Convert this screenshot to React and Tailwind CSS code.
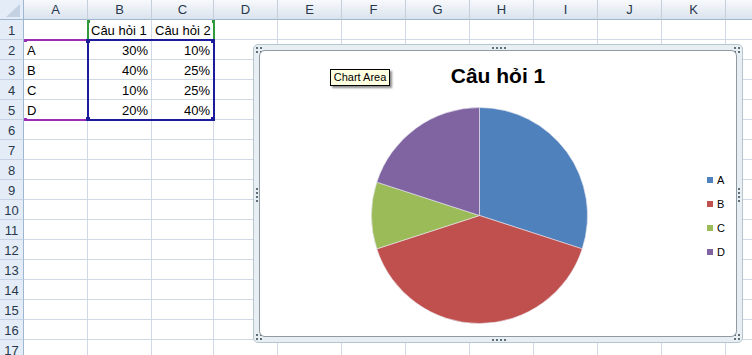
import React from 'react';

const cols = [
  { name: 'A', w: 64 },
  { name: 'B', w: 64 },
  { name: 'C', w: 62 },
  { name: 'D', w: 64 },
  { name: 'E', w: 64 },
  { name: 'F', w: 64 },
  { name: 'G', w: 64 },
  { name: 'H', w: 64 },
  { name: 'I', w: 64 },
  { name: 'J', w: 64 },
  { name: 'K', w: 64 },
  { name: '', w: 64 },
];

const data = {
  1: { B: 'Câu hỏi 1', C: 'Câu hỏi 2' },
  2: { A: 'A', B: '30%', C: '10%' },
  3: { A: 'B', B: '40%', C: '25%' },
  4: { A: 'C', B: '10%', C: '25%' },
  5: { A: 'D', B: '20%', C: '40%' },
};

const slices = [
  { label: 'A', value: 30, color: '#4f81bd' },
  { label: 'B', value: 40, color: '#c0504d' },
  { label: 'C', value: 10, color: '#9bbb59' },
  { label: 'D', value: 20, color: '#8064a2' },
];

function PieChart() {
  const r = 108;
  const c = 108.5;
  let angle = -Math.PI / 2;
  const paths = slices.map((s) => {
    const a0 = angle;
    const a1 = angle + (s.value / 100) * Math.PI * 2;
    angle = a1;
    const x0 = c + r * Math.cos(a0);
    const y0 = c + r * Math.sin(a0);
    const x1 = c + r * Math.cos(a1);
    const y1 = c + r * Math.sin(a1);
    const large = a1 - a0 > Math.PI ? 1 : 0;
    return (
      <path
        key={s.label}
        d={`M ${c} ${c} L ${x0} ${y0} A ${r} ${r} 0 ${large} 1 ${x1} ${y1} Z`}
        fill={s.color}
        stroke="#e8e8f0"
        strokeWidth="0.6"
      />
    );
  });
  return (
    <svg width="217" height="217" viewBox="0 0 217 217" className="block shrink-0">
      {paths}
    </svg>
  );
}

// little grip dots on the selected chart frame
function Grip({ vertical, count, className }) {
  const dots = [];
  for (let i = 0; i < count; i++) {
    dots.push(
      <rect
        key={i}
        x={vertical ? 0 : i * 4}
        y={vertical ? i * 4 : 0}
        width="2"
        height="2"
        fill="#5f6e78"
      />
    );
  }
  const len = count * 4 - 2;
  return (
    <svg
      width={vertical ? 2 : len}
      height={vertical ? len : 2}
      className={`absolute ${className}`}
    >
      {dots}
    </svg>
  );
}

function CornerGrip({ className }) {
  return (
    <svg width="6" height="6" className={`absolute ${className}`}>
      <rect x="0" y="0" width="2" height="2" fill="#5f6e78" />
      <rect x="4" y="0" width="2" height="2" fill="#5f6e78" />
      <rect x="0" y="4" width="2" height="2" fill="#5f6e78" />
      <rect x="4" y="4" width="2" height="2" fill="#5f6e78" />
    </svg>
  );
}

export default function App() {
  const rows = Array.from({ length: 17 }, (_, i) => i + 1);

  return (
    <div
      className="relative w-[752px] h-[355px] overflow-hidden bg-white text-[13px] text-black"
      style={{ fontFamily: '"Liberation Sans", Arial, sans-serif' }}
    >
      {/* Column headers */}
      <div className="flex h-[20px]">
        <div className="w-[24px] shrink-0 h-full border-r border-b border-[#9eb6ce] bg-[#e4ecf7] relative">
          <svg width="24" height="20" className="absolute left-0 top-0">
            <polygon points="6,17 20,17 20,4" fill="#c3d1e2" />
          </svg>
        </div>
        {cols.map((col, i) => (
          <div
            key={i}
            style={{ width: col.w }}
            className="shrink-0 h-full border-r border-b border-r-[#c4cfdb] border-b-[#9eb6ce] bg-gradient-to-b from-[#f7f9fc] to-[#dbe3ed] text-center leading-[16px] pt-[2px] text-[#27384c]"
          >
            {col.name}
          </div>
        ))}
      </div>

      {/* Rows */}
      {rows.map((row) => (
        <div key={row} className="flex h-[20px]">
          <div className="w-[24px] shrink-0 h-full border-r border-b border-r-[#9eb6ce] border-b-[#c5d3e5] bg-[#e4ecf7] flex items-end justify-center leading-[16px] text-[#27384c]">
            {row}
          </div>
          {cols.map((col, i) => {
            const val = col.name && data[row] && data[row][col.name];
            const right = val && val.endsWith('%');
            return (
              <div
                key={i}
                style={{ width: col.w }}
                className={`shrink-0 h-full border-r border-b border-[#d0d7e5] flex items-end leading-[16px] px-[3px] whitespace-nowrap ${
                  right ? 'justify-end' : 'justify-start'
                }`}
              >
                {val || ''}
              </div>
            );
          })}
        </div>
      ))}

      {/* Source data highlights, drawn over the cells */}
      <div className="absolute left-[24px] top-[39px] w-[64px] h-[82px] border-y-2 border-[#9a2fb5]">
        <span className="absolute left-0 -top-[2px] w-[3px] h-[3px] bg-[#9a2fb5]" />
        <span className="absolute left-0 -bottom-[2px] w-[3px] h-[3px] bg-[#9a2fb5]" />
      </div>
      <div className="absolute left-[87px] top-[20px] w-[128px] h-[21px] border-x-2 border-[#2f9a3c]">
        <span className="absolute -left-[2px] top-0 w-[3px] h-[3px] bg-[#2f9a3c]" />
        <span className="absolute -right-[2px] top-0 w-[3px] h-[3px] bg-[#2f9a3c]" />
      </div>
      <div className="absolute left-[87px] top-[39px] w-[128px] h-[82px] border-2 border-[#1b1b9c]">
        <span className="absolute -left-[3px] -top-[2px] w-[4px] h-[4px] bg-[#1b1b9c]" />
        <span className="absolute -right-[2px] -top-[2px] w-[4px] h-[4px] bg-[#1b1b9c]" />
        <span className="absolute -left-[3px] -bottom-[2px] w-[4px] h-[4px] bg-[#1b1b9c]" />
        <span className="absolute -right-[2px] -bottom-[2px] w-[4px] h-[4px] bg-[#1b1b9c]" />
      </div>

      {/* Chart object */}
      <div className="absolute left-[253px] top-[44px] w-[490px] h-[299px] border border-[#b6c6d0] rounded-[5px] bg-[#e8eff3] p-[5px]">
        <CornerGrip className="left-[2px] top-[2px]" />
        <CornerGrip className="right-[2px] top-[2px]" />
        <CornerGrip className="left-[2px] bottom-[2px]" />
        <CornerGrip className="right-[2px] bottom-[2px]" />
        <Grip count={4} className="left-[238px] top-[2px]" />
        <Grip count={4} className="left-[238px] bottom-[1px]" />
        <Grip vertical count={4} className="left-[2px] top-[143px]" />
        <Grip vertical count={4} className="right-[2px] top-[143px]" />

        <div className="relative h-full border border-[#8f9aa3] rounded-[6px] bg-white">
          <div className="pt-[13px] text-center text-[21px] leading-[24px] font-bold text-black">
            Câu hỏi 1
          </div>
          <div className="flex items-start mt-[19px]">
            <div className="ml-[111px]">
              <PieChart />
            </div>
            <div className="ml-[119px] mt-[66px] flex flex-col gap-[10px]">
              {slices.map((s) => (
                <div key={s.label} className="flex items-center gap-[4px] h-[14px] text-[11px] leading-[14px]">
                  <span className="w-[6px] h-[6px] shrink-0" style={{ backgroundColor: s.color }} />
                  <span>{s.label}</span>
                </div>
              ))}
            </div>
          </div>
        </div>
      </div>

      {/* Tooltip */}
      <div className="absolute left-[330px] top-[69px] w-[60px] h-[17px] border border-black bg-[#ffffe1] shadow-[2px_2px_2px_rgba(0,0,0,0.45)] text-[11px] leading-[15px] text-center">
        Chart Area
      </div>
    </div>
  );
}
